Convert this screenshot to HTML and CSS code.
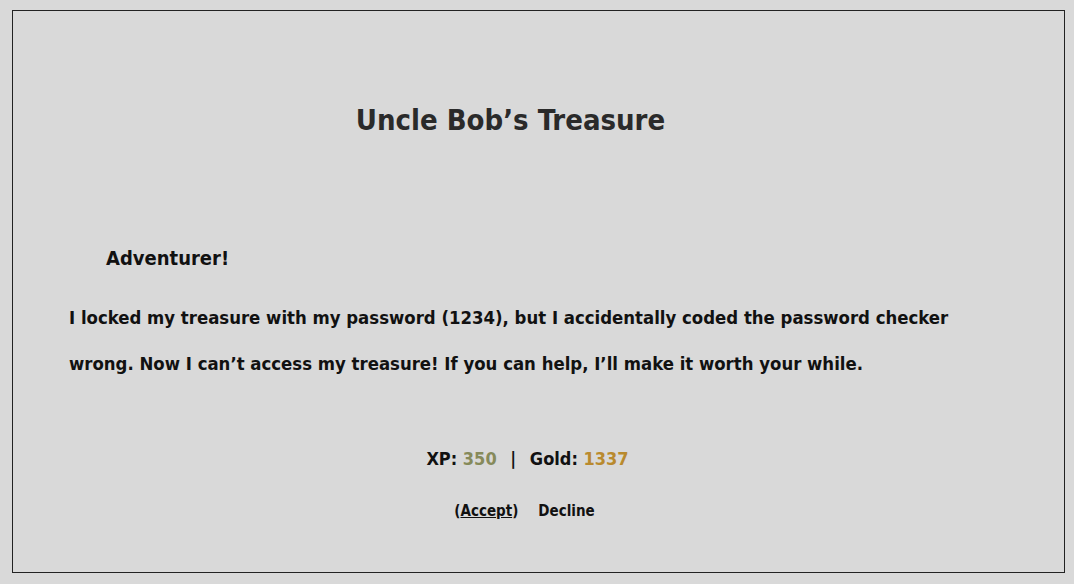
FILE: index.html
```html
<!DOCTYPE html>
<html>
<head>
<meta charset="utf-8">
<link rel="stylesheet" href="styles.css">
</head>
<body>
<div class="frame">
  <h1 class="title">Uncle Bob’s Treasure</h1>
  <h2 class="greeting">Adventurer!</h2>
  <p class="story">I locked my treasure with my password (1234), but I accidentally coded the password checker wrong. Now I can’t access my treasure! If you can help, I’ll make it worth your while.</p>
  <div class="reward">XP: <span class="xp">350</span> <span class="sep">|</span> Gold: <span class="gold">1337</span></div>
  <div class="actions"><span class="accept">(<u>Accept</u>)</span><span class="decline">Decline</span></div>
</div>
</body>
</html>
```
FILE: styles.css
```css
html, body {
  margin: 0;
  background: #d9d9d9;
}
body {
  padding: 10px 9px 11px 12px;
  font-family: "DejaVu Sans Condensed", "DejaVu Sans", sans-serif;
  font-weight: bold;
  color: #111;
}
.frame {
  border: 1px solid #222;
  box-sizing: border-box;
  height: 563px;
  padding: 0 56px;
}
.title {
  margin: 92px 0 0;
  text-align: center;
  font-size: 29px;
  color: #2a2a2a;
  padding-right: 56px;
}
.greeting {
  margin: 109px 0 0 37px;
  font-size: 20px;
}
.story {
  margin: 25px 0 0;
  font-size: 18.4px;
  line-height: 46px;
}
.reward {
  margin-top: 61px;
  text-align: center;
  font-size: 18px;
  padding-right: 22px;
}
.xp { color: #868a5a; }
.gold { color: #b98a2e; }
.sep { margin: 0 8px; }
.actions {
  margin-top: 33px;
  text-align: center;
  font-size: 15px;
  padding-right: 28px;
}
.accept { margin-right: 20px; }
```
